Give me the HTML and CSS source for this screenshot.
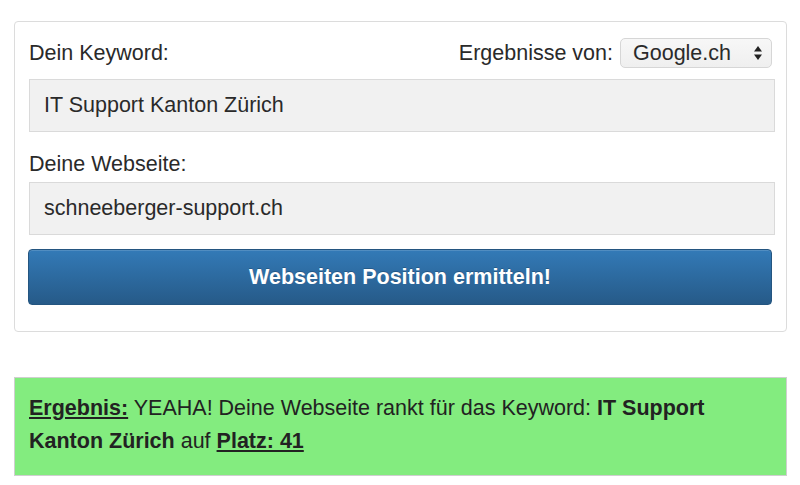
FILE: index.html
```html
<!DOCTYPE html>
<html lang="de">
<head>
<meta charset="utf-8">
<title>Keyword Position</title>
<link rel="stylesheet" href="styles.css">
</head>
<body>
<div class="page">
  <form class="card">
    <div class="head-row">
      <label class="label">Dein Keyword:</label>
      <div class="engine">
        <span class="engine-label">Ergebnisse von:</span>
        <div class="select">
          <span class="select-text">Google.ch</span>
          <svg class="select-arrows" width="10" height="16" viewBox="0 0 10 16"><path d="M5 1 L9 6.5 H1 Z" fill="#222"/><path d="M5 15 L9 9.5 H1 Z" fill="#222"/></svg>
        </div>
      </div>
    </div>
    <div class="input">IT Support Kanton Zürich</div>
    <label class="label label-site">Deine Webseite:</label>
    <div class="input">schneeberger-support.ch</div>
    <button type="button" class="btn">Webseiten Position ermitteln!</button>
  </form>
  <div class="result">
    <u class="b">Ergebnis:</u> YEAHA! Deine Webseite rankt für das Keyword: <b>IT Support Kanton Zürich</b> auf <u class="b">Platz: 41</u>
  </div>
</div>
</body>
</html>
```
FILE: styles.css
```css
html, body {
  margin: 0;
  padding: 0;
  background: #fff;
}
body {
  font-family: "Liberation Sans", Arial, Helvetica, sans-serif;
  font-size: 21.5px;
  color: #2a2a2a;
}
.page {
  padding: 21px 13px 0 14px;
}
.card {
  display: flex;
  flex-direction: column;
  border: 1px solid #dcdcdc;
  border-radius: 4px;
  padding: 16px 11px 26px 14px;
}
.head-row {
  display: flex;
  justify-content: space-between;
  align-items: center;
  height: 30px;
}
.label {
  line-height: 26px;
  display: block;
}
.engine {
  display: flex;
  align-items: center;
  gap: 7px;
  margin-right: 3px;
}
.select {
  display: flex;
  align-items: center;
  justify-content: space-between;
  box-sizing: border-box;
  width: 152px;
  height: 30px;
  padding: 0 8px 0 12px;
  border: 1px solid #d6d6d6;
  border-radius: 5px;
  background: linear-gradient(#f7f7f7, #efefef);
}
.select-arrows {
  display: block;
}
.input {
  box-sizing: border-box;
  height: 53px;
  margin-top: 11px;
  padding: 0 14px;
  display: flex;
  align-items: center;
  background: #f1f1f1;
  border: 1px solid #dadada;
}
.label-site {
  margin-top: 19px;
  margin-bottom: -6px;
}
.btn {
  margin: 14px 3px 0 -1px;
  height: 56px;
  border: 1px solid #245580;
  border-radius: 4px;
  background: linear-gradient(to bottom, #337ab7 0, #265a88 100%);
  color: #fff;
  font-family: "Liberation Sans", Arial, Helvetica, sans-serif;
  font-size: 21.5px;
  font-weight: bold;
  text-shadow: 0 -1px 0 rgba(0, 0, 0, 0.2);
  box-shadow: inset 0 1px 0 rgba(255, 255, 255, 0.15);
  cursor: pointer;
}
.result {
  margin-top: 45px;
  box-sizing: border-box;
  min-height: 99px;
  padding: 14px 14px 17px 14px;
  background: #83ec7f;
  border: 1px solid #cfcfcf;
  line-height: 33px;
  color: #222;
}
.b {
  font-weight: bold;
}
b {
  font-weight: bold;
}
```
